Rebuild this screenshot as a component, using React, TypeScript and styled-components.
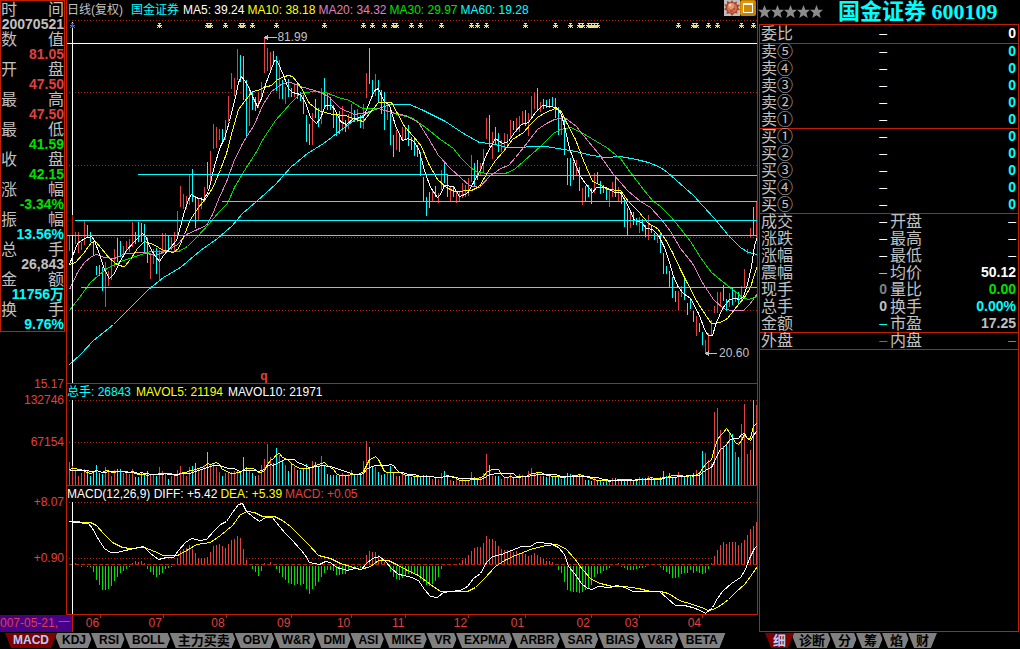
import React from "react";
import styled, { createGlobalStyle } from "styled-components";

const RED = "#e04040";
const LINE = "#c02000";
const CYAN = "#00ffff";
const GREEN = "#00e000";
const GRAY = "#c0c0c0";
const WHITE = "#ffffff";
const YELLOW = "#ffff00";
const PINK = "#e080c0";

const GlobalStyle = createGlobalStyle`
  *, *::before, *::after { box-sizing: border-box; }
  body {
    margin: 0;
    background: #000;
    color: ${GRAY};
    font-family: "Liberation Sans", "Noto Sans CJK SC", sans-serif;
    font-size: 12px;
    line-height: 16px;
  }
`;

/* ---------- data ---------- */

// One entry per trading day: direction (r = up, c = down), then the high and low.
const CANDLES =
  "r235-251 r215-237 r232-244 r232-253 r242-250 r221-245 c225-237 c232-242 c243-255 c266-275 " +
  "c265-276 c267-291 r262-307 r271-286 r260-280 r249-267 c238-262 c241-257 r246-255 r241-252 " +
  "r239-252 r222-247 c232-244 c222-242 c223-242 c224-252 c238-263 r253-279 r249-264 c248-274 " +
  "r250-280 r233-254 r233-252 c236-252 r237-250 r232-252 r211-237 r186-207 r194-209 r196-209 " +
  "r175-205 c169-202 c196-228 r198-220 r197-209 r187-202 c162-189 r151-181 r124-149 r127-148 " +
  "r129-140 c129-142 r120-140 r96-122 r73-89 r78-96 r49-80 c55-82 c56-100 c80-136 " +
  "r87-126 c92-110 c97-111 r92-108 r82-100 r37-73 r48-71 r52-73 c51-64 c56-91 " +
  "r60-99 c80-99 r87-104 c79-97 c88-97 r83-97 c83-99 c92-101 c95-114 c115-142 " +
  "c124-145 r113-145 c99-118 c108-127 r88-124 c78-107 c94-110 c97-110 c105-128 c113-136 " +
  "c111-134 r106-131 c120-132 r114-129 r104-122 c110-122 r109-122 c115-128 r104-129 r73-98 " +
  "c48-84 c80-97 r74-96 c80-102 c90-114 c92-130 r102-120 c108-145 c135-157 r130-150 " +
  "c135-152 r127-140 c127-139 c125-146 c137-150 c138-156 c145-157 c152-176 c177-201 c197-216 " +
  "c192-208 r190-201 c186-197 r193-203 r170-190 c162-183 c174-197 r186-201 c186-197 r191-203 " +
  "r191-201 r183-198 r185-197 r178-196 r155-182 c163-186 c160-180 r163-176 r149-173 r118-139 " +
  "c115-147 r132-159 c127-145 c133-152 r140-152 r133-149 r134-146 r120-138 c121-130 r118-132 " +
  "r116-132 r111-125 c110-126 r113-136 r96-117 r92-109 c88-111 r102-112 c99-109 c100-108 " +
  "c99-108 c97-107 c98-118 c107-135 r117-135 c117-155 c158-185 c158-186 c162-180 r160-175 " +
  "c167-191 r188-205 c186-201 c185-197 c188-204 r173-193 c172-184 c181-194 c185-193 c188-200 " +
  "r190-207 r182-197 c178-197 r187-201 c192-204 c199-227 c208-236 r211-228 c212-225 c218-225 " +
  "r217-233 c219-231 c225-237 r215-240 c226-233 c233-240 r234-243 c232-253 c253-274 c266-274 " +
  "c271-287 c277-298 c291-302 r291-310 r286-297 c279-300 c303-315 c299-309 c311-322 r316-336 " +
  "c323-332 c332-345 r340-353 r333-353 r320-335 r306-313 r292-313 r292-307 c285-301 c299-311 " +
  "r293-307 c287-305 r292-302 c292-304 r286-300 r269-287 r249-254 r228-237 c207-235 r202-237";

const VOLUMES = [
  23, 19, 15, 9, 12, 16, 14, 9, 14, 20, 12, 11, 18, 14, 9, 15, 16, 16, 12, 12, 11, 16, 8, 8, 12,
  10, 14, 10, 10, 9, 18, 14, 11, 6, 9, 10, 15, 19, 12, 9, 18, 19, 22, 17, 16, 20, 33, 20, 22, 18,
  13, 9, 12, 12, 13, 14, 15, 12, 28, 18, 14, 12, 9, 10, 20, 26, 41, 28, 22, 37, 30, 24, 20, 14, 22,
  18, 15, 15, 16, 21, 18, 24, 23, 18, 29, 20, 11, 10, 10, 10, 9, 12, 9, 11, 15, 10, 10, 12, 24, 44,
  38, 19, 18, 13, 10, 11, 13, 19, 13, 9, 9, 12, 9, 10, 8, 8, 8, 9, 10, 10, 8, 6, 8, 6, 12,
  14, 8, 5, 4, 6, 4, 6, 4, 5, 13, 8, 5, 7, 12, 31, 20, 9, 9, 9, 6, 8, 8, 12, 7, 6,
  11, 10, 9, 14, 17, 11, 12, 9, 9, 8, 10, 9, 9, 8, 6, 9, 12, 11, 10, 10, 10, 9, 5, 5, 4,
  7, 5, 4, 3, 4, 5, 7, 7, 5, 6, 5, 6, 6, 4, 5, 8, 7, 7, 9, 7, 6, 4, 8, 14, 9,
  12, 8, 8, 13, 8, 8, 10, 9, 12, 15, 13, 34, 32, 25, 22, 73, 77, 55, 39, 40, 53, 51, 33, 28, 61,
  81, 31, 35, 85, 80,
];

const HISTOGRAM = [
  0, 0, 1, -1, -2, -1, -2, -2, -7, -15, -20, -25, -25, -24, -21, -16, -12, -8, -6, -4, -2, 1, 3, 2, 3,
  1, -4, -7, -10, -12, -10, -8, -4, -3, -2, 0, 6, 13, 15, 16, 19, 15, 11, 6, 6, 6, 7, 12, 18, 19,
  20, 18, 16, 20, 24, 25, 28, 26, 15, 4, -1, -4, -7, -11, -6, 1, 0, 2, 0, -4, -8, -12, -15, -18, -19,
  -20, -19, -20, -19, -24, -29, -24, -21, -17, -12, -8, -5, -5, -6, -10, -10, -9, -9, -6, -3, -2, -2,
  -3, 0, 9, 13, 12, 12, 9, 7, 2, 0, -7, -12, -14, -15, -13, -10, -9, -9, -9, -11, -14, -17, -20, -21,
  -19, -16, -12, -4, -1, 0, -1, -1, 0, 1, 4, 6, 9, 13, 16, 17, 17, 21, 28, 25, 25, 23, 18, 15, 14, 14,
  14, 12, 13, 11, 11, 10, 8, 9, 11, 9, 7, 5, 3, 3, 2, -1, -5, -8, -17, -25, -26, -27, -27, -28, -27,
  -25, -23, -20, -12, -9, -8, -6, -5, -3, -1, 0, 1, -2, -3, -5, -5, -5, -4, -3, -3, -2, -1, 0, 0, -1,
  -2, -5, -7, -9, -13, -13, -12, -9, -8, -8, -5, -8, -6, -8, -9, -8, -4, 1, 8, 14, 19, 22, 20, 22, 22,
  22, 19, 21, 24, 29, 35, 38, 42,
];

const AVERAGES = [
  {
    color: CYAN,
    points:
      "69,364 80,354 93,340 113,324 130,307 148,289 163,277 180,267 200,250 217,238 232,225 242,213 256,201 275,184 290,167 307,153 323,143 340,130 352,121 372,110 390,104 409,104 421,109 445,121 463,133 479,142 490,143 507,147 545,146 557,148 575,151 592,155 605,157 620,156 636,159 648,162 660,167 667,172 675,179 685,188 693,195 702,205 714,218 728,235 740,247 748,252 757,254",
  },
  {
    color: GREEN,
    points:
      "69,310 79,297 90,282 105,269 120,261 135,256 150,251 167,251 178,251 187,246 196,237 209,223 219,211 227,203 234,187 244,170 255,153 263,138 275,120 290,103 300,93 313,91 325,92 338,97 349,100 362,108 378,108 397,114 411,117 425,127 440,139 453,148 460,157 470,167 477,172 490,173 505,173 514,169 524,160 540,146 553,133 560,129 570,127 579,131 591,138 606,147 620,158 630,172 643,189 652,200 660,206 670,216 680,228 690,241 700,257 711,272 722,281 732,289 742,297 748,299 757,296",
  },
  {
    color: PINK,
    points:
      "69,289 77,272 84,262 91,256 96,254 104,257 114,258 125,253 143,252 155,255 167,250 177,244 186,234 197,229 206,225 212,214 218,199 227,179 233,162 242,143 254,124 262,105 271,91 282,83 290,82 300,86 314,90 322,93 328,96 340,108 354,114 366,112 378,108 391,112 405,115 418,122 428,138 438,155 450,168 461,178 469,185 479,187 489,176 500,168 508,165 515,157 527,142 537,129 546,123 554,119 564,117 576,126 587,140 598,153 613,174 627,190 640,201 650,207 661,219 670,231 680,248 692,263 703,284 713,299 723,308 730,310 743,310 749,304 757,293",
  },
  {
    color: YELLOW,
    points:
      "69,264 75,262 83,253 91,242 95,241 101,248 109,258 118,265 124,266 130,259 137,248 144,241 153,244 163,250 173,252 178,248 184,234 190,219 198,207 206,197 213,186 220,169 226,153 232,130 238,109 244,101 252,91 258,90 263,87 271,85 277,79 284,76 288,75 292,76 300,86 309,103 318,110 332,114 345,115 355,119 363,121 369,113 378,102 391,102 396,111 404,126 413,136 421,146 428,163 437,179 446,187 454,191 471,190 479,186 487,172 495,160 503,151 512,139 523,132 530,124 537,117 545,112 555,108 561,111 566,122 575,139 583,160 592,181 599,184 607,189 620,190 628,201 638,211 648,223 657,228 665,239 672,252 680,269 686,281 697,302 706,316 711,323 720,322 727,318 734,309 744,297 750,287 754,274 757,265",
  },
  {
    color: WHITE,
    points:
      "69,264 72,256 77,243 84,238 91,236 94,240 98,251 104,269 109,278 114,273 119,262 126,250 134,241 142,233 145,235 149,246 155,256 159,261 163,255 170,247 176,240 180,226 184,211 188,199 191,194 195,197 203,199 208,191 214,165 220,146 224,138 229,121 235,97 238,82 241,76 247,84 252,96 257,106 261,98 265,84 270,71 274,60 277,61 283,75 288,88 292,92 300,94 305,102 310,117 316,123 320,118 325,105 331,105 335,110 340,121 346,124 353,118 363,117 369,102 374,90 378,88 383,100 389,105 395,125 402,140 408,138 413,141 418,148 424,170 430,187 437,197 440,194 444,185 453,186 459,196 467,193 473,182 479,172 486,154 495,138 502,143 508,141 514,132 521,124 528,122 535,112 542,105 556,107 561,114 565,130 569,148 575,164 580,176 585,183 592,192 596,187 606,187 614,192 620,192 627,204 634,220 641,222 646,228 652,229 658,235 664,247 669,262 673,276 678,287 683,293 690,298 698,313 705,331 708,335 712,335 716,322 722,308 729,299 735,298 739,299 743,296 747,284 751,266 754,245 757,236",
  },
];

const DIFF =
  "69,521 75,522 88,523 92,528 98,539 104,548 110,552 116,552 125,550 133,548 143,546 150,553 158,559 166,557 173,557 178,550 185,542 191,538 200,540 206,539 213,531 220,524 226,521 232,512 238,504 242,503 246,511 252,516 259,521 265,517 272,517 279,526 285,533 292,540 300,549 305,555 309,562 319,564 325,561 330,562 336,567 340,568 347,570 354,568 361,569 366,563 372,558 379,556 385,561 391,568 398,574 404,575 411,577 418,580 424,589 430,596 437,597 443,592 450,591 460,590 467,586 473,578 480,573 486,562 492,556 501,554 511,550 521,546 530,546 536,542 550,543 558,547 564,554 568,566 574,573 581,583 587,588 592,589 597,586 609,587 617,585 624,587 633,591 647,591 659,591 667,598 675,605 684,605 692,607 700,610 705,613 712,607 717,598 722,591 731,583 740,577 745,569 749,558 754,548 757,545";
const DEA =
  "69,521 90,522 96,525 104,534 112,542 122,547 130,548 144,547 154,551 163,555 177,555 188,549 196,544 210,542 220,535 232,525 240,514 247,511 254,512 262,516 274,516 282,520 290,526 300,536 308,544 318,555 330,558 340,563 350,566 360,569 370,566 378,560 388,560 396,564 407,570 418,575 430,584 440,591 450,591 467,591 475,587 484,578 495,566 504,560 515,555 530,549 545,545 556,544 565,548 574,558 582,569 591,579 600,583 612,586 624,586 638,588 650,591 660,591 668,593 679,600 692,604 701,607 708,610 713,609 720,605 728,599 736,591 744,584 750,576 757,566";

const MARKS = [
  159, 207, 210, 225, 240, 243, 252, 276, 324, 363, 372, 384, 393, 396, 411, 420, 441, 471, 477,
  486, 525, 555, 570, 579, 582, 588, 591, 594, 597, 678, 693, 696, 708, 717, 741, 753,
];

// Month label and the share of the axis that ends at its tick.
const MONTHS: [string, number][] = [
  ["06", 27], ["07", 63], ["08", 63], ["09", 66], ["10", 60], ["11", 54],
  ["12", 63], ["01", 57], ["02", 66], ["03", 48], ["04", 63],
];

const FACTS: [string, string, string][] = [
  ["时间", "20070521", GRAY],
  ["数值", "81.05", RED],
  ["开盘", "47.50", RED],
  ["最高", "47.50", RED],
  ["最低", "41.59", GREEN],
  ["收盘", "42.15", GREEN],
  ["涨幅", "-3.34%", GREEN],
  ["振幅", "13.56%", CYAN],
  ["总手", "26,843", GRAY],
  ["金额", "11756万", CYAN],
  ["换手", "9.76%", CYAN],
];

const SCALE: [string, number][] = [
  ["15.17", 44], ["132746", 0], ["67154", 26], ["+8.07", 44], ["+0.90", 40],
];

const ASKS = ["卖⑤", "卖④", "卖③", "卖②", "卖①"];
const BIDS = ["买①", "买②", "买③", "买④", "买⑤"];

const STATS: [string, string, string, string, string, string][] = [
  ["成交", "–", WHITE, "开盘", "–", WHITE],
  ["涨跌", "–", WHITE, "最高", "–", WHITE],
  ["涨幅", "–", WHITE, "最低", "–", WHITE],
  ["震幅", "–", CYAN, "均价", "50.12", WHITE],
  ["现手", "0", "#808080", "量比", "0.00", GREEN],
  ["总手", "0", GRAY, "换手", "0.00%", CYAN],
  ["金额", "–", CYAN, "市盈", "17.25", GRAY],
];

const INDICATORS = [
  "MACD", "KDJ", "RSI", "BOLL", "主力买卖", "OBV", "W&R", "DMI", "ASI", "MIKE", "VR",
  "EXPMA", "ARBR", "SAR", "BIAS", "V&R", "BETA",
];
const VIEWS = ["细", "诊断", "分", "筹", "焰", "财"];

/* ---------- helpers ---------- */

const dayX = (i: number) => 69 + 3 * i;

const candles = CANDLES.split(" ").map((entry, i) => {
  const [high, low] = entry.slice(1).split("-").map(Number);
  return { up: entry[0] === "r", high, low, x: dayX(i) + 0.5 };
});

const candlePath = (up: boolean) =>
  candles.filter((c) => c.up === up).map((c) => `M${c.x} ${c.high}V${c.low}`).join("");

const volumePath = (up: boolean) =>
  candles
    .map((c, i) => (c.up === up ? `M${c.x} 485V${485 - VOLUMES[i]}` : ""))
    .join("");

// Days before the first one shown count with a typical volume.
const movingAverage = (span: number) =>
  VOLUMES.map((_, i) => {
    let sum = 0;
    for (let k = i - span + 1; k <= i; k++) sum += k < 0 ? 14 : VOLUMES[k];
    return `${dayX(i) + 0.5},${Math.round(485 - sum / span) + 0.5}`;
  }).join(" ");

const histogramPath = (up: boolean) =>
  HISTOGRAM.map((v, i) => {
    const x = dayX(i) + 0.5;
    if (up) return v > 0 ? `M${x} 564V${564 - v}` : "";
    return v < 0 ? `M${x} 566V${565 - v}` : "";
  }).join("");

const centred = (points: string) =>
  points.split(" ").map((p) => p.split(",").map((n) => Number(n) + 0.5).join(",")).join(" ");

/* ---------- layout ---------- */

const Page = styled.div`
  display: grid;
  grid-template-columns: minmax(0, 1fr) 262px;
  min-height: 100vh;
  background: #000;
`;

const Column = styled.div`
  display: flex;
  flex-direction: column;
  min-width: 0;
`;

const Workspace = styled.div`
  display: grid;
  grid-template-columns: 66px minmax(0, 1fr);
`;

const Sidebar = styled.aside`
  display: flex;
  flex-direction: column;
`;

const FactList = styled.dl`
  width: 65px;
  margin: 0;
  border: 1px solid ${LINE};
`;

const FactName = styled.dt`
  display: flex;
  justify-content: space-between;
  height: 17px;
  font-size: 16px;
  line-height: 17px;
`;

const FactValue = styled.dd<{ $color: string }>`
  display: flex;
  justify-content: flex-end;
  height: 13px;
  margin: 0;
  color: ${(p) => p.$color};
  font-size: 14px;
  font-weight: bold;
  line-height: 13px;
`;

const ScaleLabel = styled.div<{ $gap: number }>`
  margin-top: ${(p) => p.$gap}px;
  padding-right: 2px;
  color: ${RED};
  text-align: right;
`;

const Charts = styled.main`
  border: solid ${LINE};
  border-width: 0 1px 1px;
  min-width: 0;
`;

const ChartHeader = styled.header`
  display: flex;
  justify-content: space-between;
  height: 20px;
`;

const Legend = styled.div<{ $divided?: boolean; $gap?: number }>`
  display: flex;
  gap: ${(p) => p.$gap ?? 3}px;
  height: ${(p) => (p.$divided ? 17 : 20)}px;
  border-top: ${(p) => (p.$divided ? `1px solid ${LINE}` : "0")};
  line-height: ${(p) => (p.$divided ? 16 : 20)}px;
  white-space: nowrap;
`;

const Tint = styled.span<{ $color: string }>`
  color: ${(p) => p.$color};
`;

const StockName = styled(Tint)`
  padding: 0 1px 0 5px;
`;

const IconButton = styled.button`
  width: 16px;
  height: 16px;
  padding: 0;
  border: 0;
  background: none;
  svg { display: block; }
`;

const WindowButtons = styled.div`
  display: flex;
  padding-right: 1px;
`;

const Plot = styled.svg<{ $height: number }>`
  display: block;
  width: 100%;
  height: ${(p) => p.$height}px;
  fill: none;
  shape-rendering: crispEdges;
`;

const PriceArea = styled.div`
  position: relative;
`;

const Callout = styled.span<{ $x: number; $y: number; $color: string }>`
  position: absolute;
  left: ${(p) => p.$x}%;
  top: ${(p) => p.$y}%;
  color: ${(p) => p.$color};
`;

const TimeAxis = styled.div`
  display: flex;
  height: 18px;
  padding-right: 55px;
`;

const DateTag = styled.div`
  width: 73px;
  height: 17px;
  flex: none;
  border-right: 1px solid ${LINE};
  background: #480088;
  color: ${RED};
  line-height: 17px;
  white-space: nowrap;
`;

const Month = styled.div<{ $share: number }>`
  flex: ${(p) => p.$share} 1 0;
  padding-right: 2px;
  background: linear-gradient(${LINE}, ${LINE}) top right / 1px 3px no-repeat;
  color: ${RED};
  text-align: right;
`;

const Tabs = styled.nav<{ $indent: number }>`
  display: flex;
  height: 16px;
  padding-left: ${(p) => p.$indent}px;
`;

const TabFace = styled.span<{ $active: boolean }>`
  display: block;
  padding: 0 8px;
  background: ${(p) => (p.$active ? "#800000" : "#808080")};
  color: ${(p) => (p.$active ? "#b0d0ff" : "#000")};
  clip-path: polygon(0 0, 100% 0, calc(100% - 6px) 100%, 6px 100%);
`;

const TabButton = styled.button<{ $active: boolean; $cjk: boolean }>`
  position: relative;
  z-index: ${(p) => (p.$active ? 1 : 0)};
  flex: none;
  height: 15px;
  margin: 0 0 0 -5px;
  padding: 0 0 0 2px;
  border: 0;
  background: #000;
  clip-path: polygon(0 0, 100% 0, calc(100% - 6px) 100%, 6px 100%);
  font-family: inherit;
  font-size: ${(p) => (p.$cjk ? 13 : 12)}px;
  font-weight: bold;
  line-height: 15px;
  white-space: nowrap;
`;

const QuoteHeader = styled.header`
  display: flex;
  gap: 15px;
  height: 24px;
`;

const Rating = styled.svg`
  width: 65px;
  height: 24px;
  fill: #8c8c8c;
`;

const QuoteTitle = styled.h1`
  margin: 0;
  color: ${CYAN};
  font-family: "Liberation Serif", "Noto Sans CJK SC", serif;
  font-size: 22px;
  font-weight: bold;
  line-height: 24px;
  white-space: nowrap;
`;

const QuotePanel = styled.section`
  flex: 1;
  margin: 0 1px 1px;
  border: solid ${LINE};
  border-width: 0 1px 1px;
`;

const QuoteTable = styled.table<{ $row?: number }>`
  width: 100%;
  table-layout: fixed;
  border-collapse: collapse;
  box-shadow: inset 0 1px ${LINE};
  tr { height: ${(p) => p.$row ?? 17}px; }
`;

const Name = styled.th`
  padding: 0 0 0 1px;
  color: ${GRAY};
  font-size: 16px;
  font-weight: normal;
  line-height: 17px;
  text-align: left;
  white-space: nowrap;
`;

const ValueCell = styled.td<{ $color: string; $empty: boolean }>`
  padding: 0 2px 0 0;
  color: ${(p) => p.$color};
  font-size: 14px;
  font-weight: ${(p) => (p.$empty ? "normal" : "bold")};
  line-height: 17px;
  text-align: right;
`;

/* ---------- parts ---------- */

function Value({ color, span, text }: { color: string; span?: number; text: string }) {
  return (
    <ValueCell $color={color} $empty={text === "–"} colSpan={span}>
      {text}
    </ValueCell>
  );
}

function TabBar({ labels, indent, name }: { labels: string[]; indent: number; name: string }) {
  return (
    <Tabs $indent={indent} aria-label={name}>
      {labels.map((label, i) => (
        <TabButton key={label} type="button" $active={i === 0} $cjk={/[^\x00-\x7f]/.test(label)}>
          <TabFace $active={i === 0}>{label}</TabFace>
        </TabButton>
      ))}
    </Tabs>
  );
}

function Dotted({ y }: { y: number }) {
  return <path d={`M69 ${y}.5H757`} stroke={LINE} strokeDasharray="1 2" />;
}

function DepthTable({ names }: { names: string[] }) {
  return (
    <QuoteTable>
      <tbody>
        {names.map((n) => (
          <tr key={n}>
            <Name scope="row">{n}</Name>
            <Value color={WHITE} text="–" />
            <Value color={CYAN} span={2} text="0" />
          </tr>
        ))}
      </tbody>
    </QuoteTable>
  );
}

function PricePlot() {
  return (
    <PriceArea>
      <Plot $height={363} viewBox="67 20 690 363" preserveAspectRatio="none" role="img" aria-label="日线">
        {[20, 92, 165, 237, 310].map((y) => <Dotted key={y} y={y} />)}
        <path d={candlePath(true)} stroke={RED} />
        <path d={candlePath(false)} stroke={CYAN} />
        {AVERAGES.map((a) => (
          <polyline key={a.color} points={centred(a.points)} stroke={a.color} />
        ))}
        <path
          d="M138 174.5H447M447 175.5H757M222 201.5H757M75 220.5H757M67 235.5H757M81 287.5H757"
          stroke={CYAN}
        />
        <path d="M67 43.5H757M72.5 22V383" stroke={WHITE} />
        <path d="M72.5 215V235" stroke={LINE} />
        <path
          d={MARKS.map((x) => `M${x - 2} 25.5h5M${x + 0.5} 23v5M${x - 1} 23l4 5M${x + 2} 23l-4 5`).join("")}
          stroke="#e8e080"
        />
        <path d="M70 25.5h5M72.5 23v5M71 23l4 5M74 23l-4 5" stroke="#4060e0" />
        <path d="M265 37.5H277M706 353.5H717" stroke={GRAY} />
        <path d="M264 37.5l4 -3v6zM705 353.5l4 -3v6z" fill={GRAY} />
      </Plot>
      <Callout $x={30.5} $y={2.5} $color={GRAY}>81.99</Callout>
      <Callout $x={94.5} $y={89.5} $color={GRAY}>20.60</Callout>
      <Callout $x={28} $y={96} $color={RED}><b>q</b></Callout>
    </PriceArea>
  );
}

function VolumePlot() {
  return (
    <Plot $height={85} viewBox="67 400 690 85" preserveAspectRatio="none" role="img" aria-label="总手">
      <Dotted y={400} />
      <Dotted y={442} />
      <path d={volumePath(true)} stroke={RED} />
      <path d={volumePath(false)} stroke={CYAN} />
      <path d="M72.5 400V466" stroke={WHITE} />
      <polyline points={movingAverage(5)} stroke={YELLOW} />
      <polyline points={movingAverage(10)} stroke={WHITE} />
    </Plot>
  );
}

function MacdPlot() {
  return (
    <Plot $height={112} viewBox="67 502 690 112" preserveAspectRatio="none" role="img" aria-label="MACD">
      <Dotted y={502} />
      <Dotted y={558} />
      <path d="M69 564.5H757" stroke={LINE} strokeDasharray="4 2" />
      <path d={histogramPath(true)} stroke={RED} />
      <path d={histogramPath(false)} stroke={GREEN} />
      <polyline points={centred(DEA)} stroke={YELLOW} />
      <polyline points={centred(DIFF)} stroke={WHITE} />
      <path d="M72.5 502V614" stroke={WHITE} />
    </Plot>
  );
}

export default function App() {
  return (
    <Page>
      <GlobalStyle />
      <Column>
        <Workspace>
          <Sidebar>
            <FactList>
              {FACTS.map(([name, value, color]) => (
                <React.Fragment key={name}>
                  <FactName>
                    <span>{name[0]}</span>
                    <span>{name[1]}</span>
                  </FactName>
                  <FactValue $color={color}>{value}</FactValue>
                </React.Fragment>
              ))}
            </FactList>
            {SCALE.map(([label, gap]) => (
              <ScaleLabel key={label} $gap={gap}>{label}</ScaleLabel>
            ))}
          </Sidebar>
          <Charts>
            <ChartHeader>
              <Legend>
                <span>日线(复权)</span>
                <StockName $color={CYAN}>国金证券</StockName>
                <Tint $color={WHITE}>MA5: 39.24</Tint>
                <Tint $color={YELLOW}>MA10: 38.18</Tint>
                <Tint $color={PINK}>MA20: 34.32</Tint>
                <Tint $color={GREEN}>MA30: 29.97</Tint>
                <Tint $color={CYAN}>MA60: 19.28</Tint>
              </Legend>
              <WindowButtons>
                <IconButton type="button" aria-label="诊断">
                  <svg width="16" height="16" viewBox="0 0 16 16">
                    <rect width="16" height="16" fill="#c0c0c0" />
                    <path
                      d="M8 0l1.500 2.500L13 1.500l-.5 3L16 5l-2 2.500 2 2.500-3 .5.5 3-3-.5L8 16l-2-2.800-3.500.8.500-3.200L0 9.500 2 7 0 4.500l3-.3L3 1l3.500 1.300z"
                      fill="#a84828"
                    />
                    <circle cx="8" cy="8" r="5" fill="#d07050" />
                    <circle cx="7" cy="6" r="3" fill="#e89878" />
                    <circle cx="6" cy="5" r="1" fill="#d8f0d0" />
                    <path d="M9 9h2M6 11h3" stroke="#903820" fill="none" />
                  </svg>
                </IconButton>
                <IconButton type="button" aria-label="最大化">
                  <svg width="16" height="16" viewBox="0 0 16 16">
                    <rect width="16" height="16" rx="2" fill="#c88000" />
                    <path d="M1 1h14L1 15z" fill="#e09808" />
                    <rect x="3.500" y="4" width="9" height="8.500" fill="#d08800" stroke="#fff" />
                    <path d="M3 4h10" stroke="#fff" strokeWidth="2" />
                  </svg>
                </IconButton>
              </WindowButtons>
            </ChartHeader>
            <PricePlot />
            <Legend $divided $gap={5}>
              <Tint $color={CYAN}>总手: 26843</Tint>
              <Tint $color={YELLOW}>MAVOL5: 21194</Tint>
              <Tint $color={WHITE}>MAVOL10: 21971</Tint>
            </Legend>
            <VolumePlot />
            <Legend $divided>
              <Tint $color={WHITE}>MACD(12,26,9) DIFF: +5.42</Tint>
              <Tint $color={YELLOW}>DEA: +5.39</Tint>
              <Tint $color={RED}>MACD: +0.05</Tint>
            </Legend>
            <MacdPlot />
          </Charts>
        </Workspace>
        <TimeAxis>
          <DateTag>007-05-21,一</DateTag>
          {MONTHS.map(([label, share]) => (
            <Month key={label} $share={share}>{label}</Month>
          ))}
        </TimeAxis>
        <TabBar labels={INDICATORS} indent={8} name="指标" />
      </Column>
      <Column>
        <QuoteHeader>
          <Rating viewBox="0 0 65 24" role="img" aria-label="评级">
            {[0, 1, 2, 3, 4].map((i) => (
              <path
                key={i}
                transform={`translate(${i * 13} 5)`}
                d="M6.500 0l1.800 4.700 4.700.1-3.600 3.300 1.300 4.900-4.200-2.700L2.300 13l1.300-4.900L0 4.800l4.700-.1z"
              />
            ))}
          </Rating>
          <QuoteTitle>国金证券 600109</QuoteTitle>
        </QuoteHeader>
        <QuotePanel>
          <QuoteTable $row={19}>
            <tbody>
              <tr>
                <Name scope="row">委比</Name>
                <Value color={WHITE} text="–" />
                <Value color={WHITE} span={2} text="0" />
              </tr>
            </tbody>
          </QuoteTable>
          <DepthTable names={ASKS} />
          <DepthTable names={BIDS} />
          <QuoteTable>
            <tbody>
              {STATS.map(([a, av, ac, b, bv, bc]) => (
                <tr key={a}>
                  <Name scope="row">{a}</Name>
                  <Value color={ac} text={av} />
                  <Name scope="row">{b}</Name>
                  <Value color={bc} text={bv} />
                </tr>
              ))}
            </tbody>
          </QuoteTable>
          <ClosingTable>
            <tbody>
              <tr>
                <Name scope="row">外盘</Name>
                <Value color={RED} text="–" />
                <Name scope="row">内盘</Name>
                <Value color={GREEN} text="–" />
              </tr>
            </tbody>
          </ClosingTable>
        </QuotePanel>
        <TabBar labels={VIEWS} indent={10} name="视图" />
      </Column>
    </Page>
  );
}

const ClosingTable = styled(QuoteTable)`
  box-shadow: inset 0 1px ${LINE}, 0 1px ${LINE};
`;
